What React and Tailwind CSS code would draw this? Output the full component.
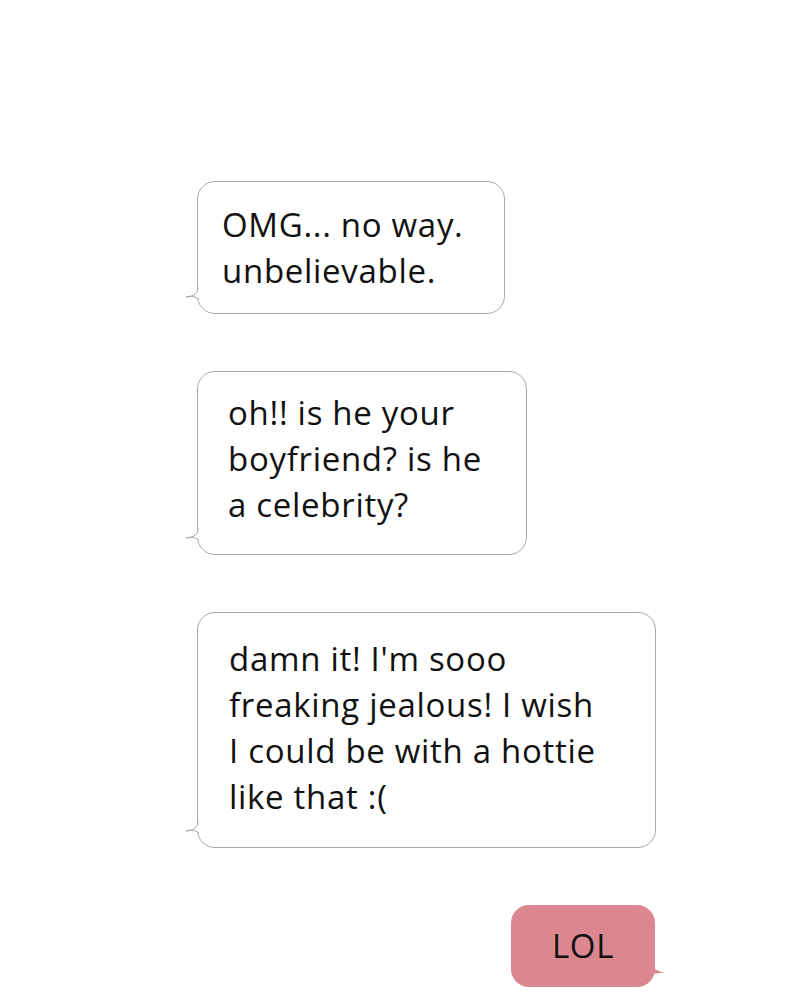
import React from 'react';

const font = { fontFamily: '"Open Sans", "Noto Sans", sans-serif' };

const LeftTail = () => (
    <svg className="absolute -left-[13px] bottom-[12px]" width="16" height="14" viewBox="0 0 16 14">
        <path d="M13 0 C13 6 10 9 1 10 C6 9 10 9 14 12 L16 12 L16 0 Z" fill="#ffffff" />
        <path d="M13 0 C13 6 10 9 1 10 C6 9 10 9 14 12" fill="none" stroke="#a8a8a8" strokeWidth="1" />
    </svg>
);

const Bubble = ({ lines, className }) => (
    <div className={`relative bg-white border border-[#a8a8a8] rounded-[18px] text-[33px] leading-[46px] tracking-[0.7px] text-[#111] ${className}`}>
        {lines.map(line => (
            <div key={line} className="whitespace-nowrap">{line}</div>
        ))}
        <LeftTail />
    </div>
);

export default function App() {
    return (
        <div className="w-[800px] h-[1000px] bg-white overflow-hidden" style={font}>
            <div className="flex flex-col gap-[57px] pt-[181px] pl-[197px]">
                <Bubble
                    className="w-[308px] h-[133px] pt-[20px] pl-[24px]"
                    lines={['OMG... no way.', 'unbelievable.']}
                />
                <Bubble
                    className="w-[330px] h-[184px] pt-[18px] pl-[30px]"
                    lines={['oh!! is he your', 'boyfriend? is he', 'a celebrity?']}
                />
                <Bubble
                    className="w-[459px] h-[236px] pt-[23px] pl-[31px]"
                    lines={["damn it! I'm sooo", 'freaking jealous! I wish', 'I could be with a hottie', 'like that :(']}
                />
                <div className="relative ml-[314px] w-[144px] h-[82px] bg-[#db878f] rounded-[18px] flex items-center justify-center text-[33px] tracking-[0.7px] text-[#111]">
                    LOL
                    <svg className="absolute -right-[11px] bottom-[12px]" width="16" height="12" viewBox="0 0 16 12">
                        <path d="M0 0 L3 0 C3 5 6 8 15 10 C9 10 5 10 1 12 L0 12 Z" fill="#db878f" />
                    </svg>
                </div>
            </div>
        </div>
    );
}
